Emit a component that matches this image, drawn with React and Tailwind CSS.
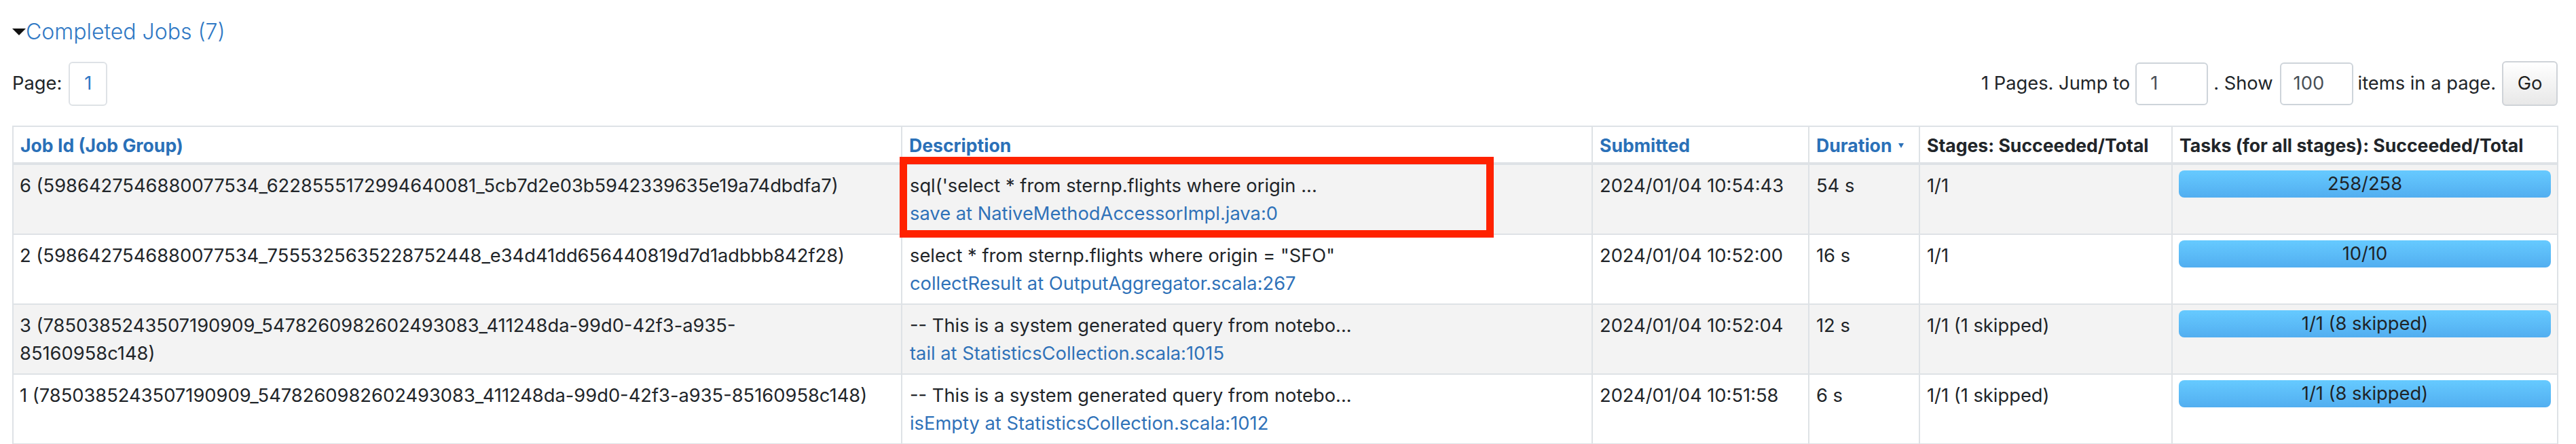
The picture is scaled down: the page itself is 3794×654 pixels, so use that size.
import React from "react";

const jobs = [
  {
    id: ["6 (5986427546880077534_6228555172994640081_5cb7d2e03b5942339635e19a74dbdfa7)"],
    desc: "sql('select * from sternp.flights where origin ...",
    link: "save at NativeMethodAccessorImpl.java:0",
    submitted: "2024/01/04 10:54:43",
    duration: "54 s",
    stages: "1/1",
    tasks: "258/258",
  },
  {
    id: ["2 (5986427546880077534_7555325635228752448_e34d41dd656440819d7d1adbbb842f28)"],
    desc: 'select * from sternp.flights where origin = "SFO"',
    link: "collectResult at OutputAggregator.scala:267",
    submitted: "2024/01/04 10:52:00",
    duration: "16 s",
    stages: "1/1",
    tasks: "10/10",
  },
  {
    id: ["3 (7850385243507190909_5478260982602493083_411248da-99d0-42f3-a935-", "85160958c148)"],
    desc: "-- This is a system generated query from notebo...",
    link: "tail at StatisticsCollection.scala:1015",
    submitted: "2024/01/04 10:52:04",
    duration: "12 s",
    stages: "1/1 (1 skipped)",
    tasks: "1/1 (8 skipped)",
  },
  {
    id: ["1 (7850385243507190909_5478260982602493083_411248da-99d0-42f3-a935-85160958c148)"],
    desc: "-- This is a system generated query from notebo...",
    link: "isEmpty at StatisticsCollection.scala:1012",
    submitted: "2024/01/04 10:51:58",
    duration: "6 s",
    stages: "1/1 (1 skipped)",
    tasks: "1/1 (8 skipped)",
  },
];

const Th = ({ children, blue }) => (
  <th
    className={`border-2 border-b-4 border-[#dee2e6] pl-[10px] pt-[7px] pb-[5px] text-left text-[26.6px] font-bold leading-[40px] whitespace-nowrap ${
      blue ? "text-[#2a70b8]" : "text-[#212529]"
    }`}
  >
    {children}
  </th>
);

const App = () => {
  return (
    <div className="relative min-h-[654px] bg-white pl-[18px] pr-[27px] pt-[25px] font-['Inter','Liberation_Sans',sans-serif] text-[27.3px] text-[#212529]">
      {/* Title */}
      <div className="flex h-[44px] items-center">
        <svg width="20" height="10" viewBox="0 0 20 10" className="shrink-0">
          <polygon points="0,0 20,0 10,10" fill="#111" />
        </svg>
        <span className="text-[32px] font-light leading-[44px] text-[#2f78c4]">Completed Jobs (7)</span>
      </div>

      {/* Pagination */}
      <div className="mt-[21px] flex h-[66px] items-center justify-between">
        <div className="flex items-center gap-[10px]">
          <span>Page:</span>
          <span className="flex h-[65px] w-[57px] items-center justify-center rounded-[6px] border-2 border-[#dee2e6] text-[#2f78c4]">
            1
          </span>
        </div>
        <div className="flex items-center">
          <span>1 Pages. Jump to</span>
          <span className="ml-[8px] flex h-[63px] w-[107px] items-center rounded-[6px] border-2 border-[#ced4da] pl-[20px] text-[#495057]">
            1
          </span>
          <span className="ml-[8px]">. Show</span>
          <span className="ml-[10px] flex h-[63px] w-[108px] items-center rounded-[6px] border-2 border-[#ced4da] pl-[18px] text-[#495057]">
            100
          </span>
          <span className="ml-[7px]">items in a page.</span>
          <button className="ml-[9px] h-[66px] w-[82px] rounded-[6px] border-2 border-[#cfd3d8] bg-gradient-to-b from-white to-[#e8e8e8] text-[#222]">
            Go
          </button>
        </div>
      </div>

      {/* Table */}
      <table className="mt-[29px] w-[3748px] table-fixed border-collapse">
        <colgroup>
          <col className="w-[1309px]" />
          <col className="w-[1017px]" />
          <col className="w-[319px]" />
          <col className="w-[163px]" />
          <col className="w-[372px]" />
          <col className="w-[568px]" />
        </colgroup>
        <thead>
          <tr>
            <Th blue>Job Id (Job Group)</Th>
            <Th blue>Description</Th>
            <Th blue>Submitted</Th>
            <Th blue>
              <span className="inline-flex items-center gap-[10px]">
                Duration
                <svg width="8" height="7" viewBox="0 0 8 7">
                  <polygon points="0,0 8,0 4,7" fill="#2a70b8" />
                </svg>
              </span>
            </Th>
            <Th>Stages: Succeeded/Total</Th>
            <Th>Tasks (for all stages): Succeeded/Total</Th>
          </tr>
        </thead>
        <tbody>
          {jobs.map((job, i) => (
            <tr key={i} className={i % 2 === 0 ? "bg-[#f3f3f3]" : "bg-white"}>
              <td className="h-[102px] border-2 border-[#dee2e6] pl-[9px] pt-[10px] pb-[9px] align-top leading-[41px] whitespace-nowrap">
                {job.id.map((line, k) => (
                  <div key={k}>{line}</div>
                ))}
              </td>
              <td className="border-2 border-[#dee2e6] pl-[11px] pt-[10px] pb-[9px] align-top leading-[41px] whitespace-nowrap">
                <div>{job.desc}</div>
                <div className="text-[#2f72b9]">{job.link}</div>
              </td>
              <td className="border-2 border-[#dee2e6] pl-[10px] pt-[10px] align-top leading-[41px] whitespace-nowrap">
                {job.submitted}
              </td>
              <td className="border-2 border-[#dee2e6] pl-[10px] pt-[10px] align-top leading-[41px] whitespace-nowrap">
                {job.duration}
              </td>
              <td className="border-2 border-[#dee2e6] pl-[10px] pt-[10px] align-top leading-[41px] whitespace-nowrap">
                {job.stages}
              </td>
              <td className="border-2 border-[#dee2e6] px-[9px] pt-[8px] align-top">
                <div className="h-[40px] rounded-[8px] bg-gradient-to-b from-[#66caff] to-[#52aef0] text-center leading-[40px] text-[#1f2428]">
                  {job.tasks}
                </div>
              </td>
            </tr>
          ))}
        </tbody>
      </table>

      {/* Highlight annotation */}
      <div className="pointer-events-none absolute left-[1325px] top-[231px] h-[119px] w-[875px] border-[11px] border-[#ff2200]" />
    </div>
  );
};

export default App;
